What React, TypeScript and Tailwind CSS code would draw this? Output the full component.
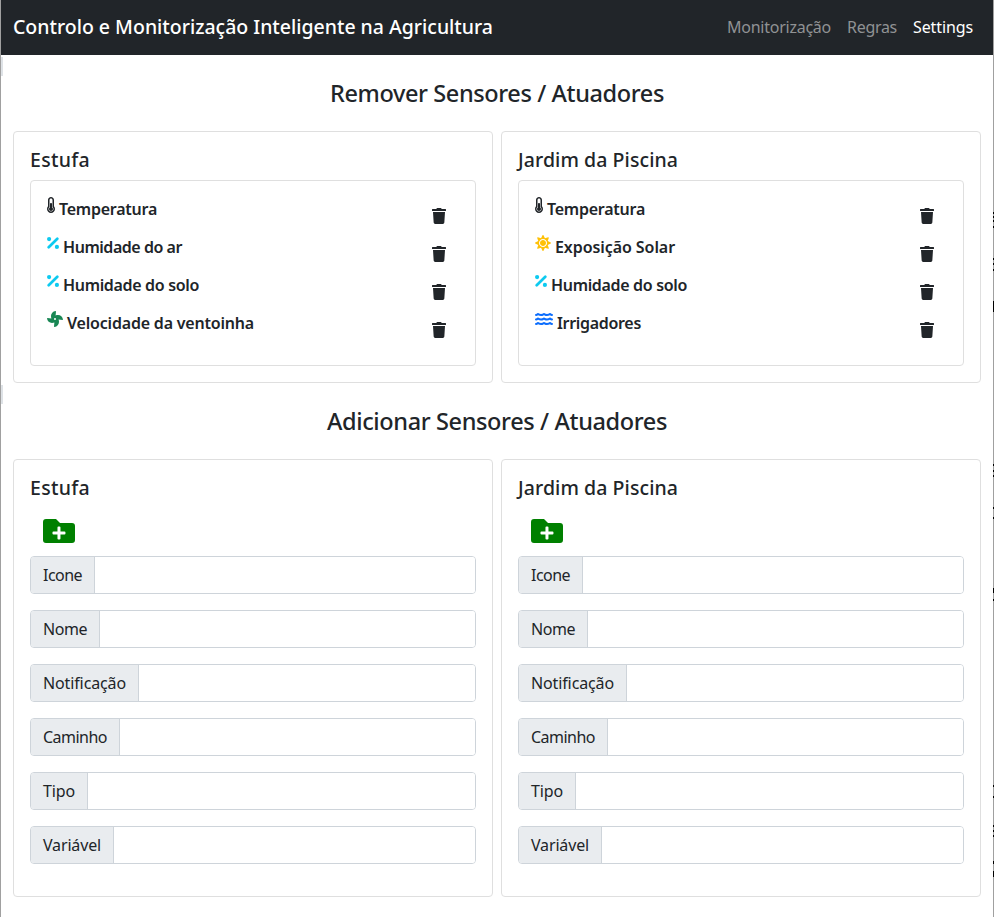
import { useLayoutEffect, useRef, useState } from "react";
import type { ReactNode } from "react";
import { FaFan, FaFolderPlus, FaSun, FaThermometerHalf, FaTrash } from "react-icons/fa";
import { FaWater } from "react-icons/fa6";

// Text whose tracking is adjusted so that the line takes the given width.
function Fit({ w, className = "", children }: { w: number; className?: string; children: string }) {
  const ref = useRef<HTMLSpanElement>(null);
  const [spacing, setSpacing] = useState(0);
  useLayoutEffect(() => {
    if (ref.current) {
      setSpacing((w - ref.current.getBoundingClientRect().width) / children.length);
    }
  }, [w, children]);
  return (
    <span ref={ref} className={`inline-block whitespace-nowrap ${className}`} style={{ letterSpacing: spacing }}>
      {children}
    </span>
  );
}

function Percent() {
  return (
    <svg viewBox="0 0 12 16" className="h-4 w-3 text-[#0dcaf0]" fill="currentColor">
      <circle cx="2.1" cy="4.1" r="2.1" />
      <circle cx="9.9" cy="11.9" r="2.1" />
      <path d="M1.7 12.3 10.3 3.7" stroke="currentColor" strokeWidth="2.7" strokeLinecap="round" />
    </svg>
  );
}

type Sensor = { name: string; w: number; icon: ReactNode };

const thermometer = <FaThermometerHalf className="h-4 w-2" />;
const percent = <Percent />;

const zones: { title: string; titleW: number; sensors: Sensor[] }[] = [
  {
    title: "Estufa",
    titleW: 60,
    sensors: [
      { name: "Temperatura", w: 98, icon: thermometer },
      { name: "Humidade do ar", w: 119, icon: percent },
      { name: "Humidade do solo", w: 136, icon: percent },
      { name: "Velocidade da ventoinha", w: 187, icon: <FaFan className="size-4 text-[#198754]" /> },
    ],
  },
  {
    title: "Jardim da Piscina",
    titleW: 160,
    sensors: [
      { name: "Temperatura", w: 98, icon: thermometer },
      { name: "Exposição Solar", w: 120, icon: <FaSun className="size-4 text-[#ffc107]" /> },
      { name: "Humidade do solo", w: 136, icon: percent },
      { name: "Irrigadores", w: 84, icon: <FaWater className="h-4 w-[18px] text-[#0d6efd]" /> },
    ],
  },
];

const fields = [
  { label: "Icone", w: 39 },
  { label: "Nome", w: 44 },
  { label: "Notificação", w: 83 },
  { label: "Caminho", w: 64 },
  { label: "Tipo", w: 32 },
  { label: "Variável", w: 58 },
];

// Slivers of the neighbouring window along the right edge: [top, height].
const slivers = [
  [212, 2], [216, 2], [220, 2], [226, 2], [258, 2], [263, 2], [269, 2], [301, 11],
  [464, 2], [470, 2], [475, 2], [507, 2], [517, 2], [588, 5], [599, 2],
  [785, 2], [796, 2], [825, 2], [830, 2], [835, 2], [861, 3], [871, 6],
];

function Heading({ w, children }: { w: number; children: string }) {
  return (
    <h2 className="flex h-[29px] justify-center text-[23.5px] leading-[29px] font-medium">
      <Fit w={w}>{children}</Fit>
    </h2>
  );
}

export default function App() {
  return (
    <div className="relative h-[917px] w-[994px] border-x border-[#a0a0a0] bg-white font-['Noto_Sans',sans-serif] text-base text-[#212529]">
      <nav className="flex h-[55px] items-center justify-between bg-[#212529] pr-5 pb-0.5 pl-3">
        <Fit w={480} className="text-[19.5px] leading-[30px] font-medium text-white">
          Controlo e Monitorização Inteligente na Agricultura
        </Fit>
        <div className="flex gap-4 leading-6 text-[#909294]">
          <Fit w={104}>Monitorização</Fit>
          <Fit w={50}>Regras</Fit>
          <Fit w={60} className="text-white">Settings</Fit>
        </div>
      </nav>

      <main className="px-3 pt-6">
        <Heading w={334}>Remover Sensores / Atuadores</Heading>
        <div className="mt-[23px] grid grid-cols-2 gap-2">
          {zones.map((z) => (
            <section key={z.title} className="h-[252px] rounded border border-[#dfdfdf] p-4">
              <h3 className="flex h-6 text-[19.5px] leading-6 font-medium">
                <Fit w={z.titleW}>{z.title}</Fit>
              </h3>
              <ul className="mt-2 h-[186px] rounded border border-[#dfdfdf] px-4 pt-4">
                {z.sensors.map((s) => (
                  <li key={s.name} className="flex h-[38px] justify-between">
                    <div className="flex gap-1">
                      {s.icon}
                      <Fit w={s.w} className="leading-6 font-semibold">{s.name}</Fit>
                    </div>
                    <FaTrash className="mt-[11px] mr-[13px] h-4 w-3.5" />
                  </li>
                ))}
              </ul>
            </section>
          ))}
        </div>

        <div className="mt-6">
          <Heading w={340}>Adicionar Sensores / Atuadores</Heading>
        </div>
        <div className="mt-[23px] grid grid-cols-2 gap-2">
          {zones.map((z) => (
            <section key={z.title} className="h-[438px] rounded border border-[#dfdfdf] p-4">
              <h3 className="flex h-6 text-[19.5px] leading-6 font-medium">
                <Fit w={z.titleW}>{z.title}</Fit>
              </h3>
              <FaFolderPlus className="mt-[15px] ml-[13px] size-8 text-[#008000]" />
              <div className="mt-[9px] flex flex-col gap-4">
                {fields.map((f) => (
                  <label key={f.label} className="flex h-[38px] overflow-hidden rounded border border-[#ced4da]">
                    <span className="border-r border-[#ced4da] bg-[#e9ecef] px-3 leading-9">
                      <Fit w={f.w}>{f.label}</Fit>
                    </span>
                    <input className="min-w-0 flex-1 bg-white px-3 outline-none" />
                  </label>
                ))}
              </div>
            </section>
          ))}
        </div>
      </main>

      <div className="absolute top-[57px] left-0 h-[19px] w-0.5 bg-[#dee2e6]" />
      <div className="absolute top-[385px] left-0 h-[19px] w-0.5 bg-[#dee2e6]" />
      {slivers.map(([top, height]) => (
        <div key={top} className="absolute -right-px w-px bg-black" style={{ top, height }} />
      ))}
    </div>
  );
}
